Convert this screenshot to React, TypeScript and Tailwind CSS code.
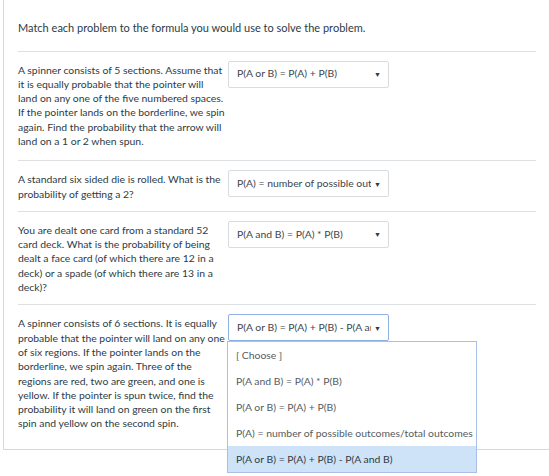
import React from 'react';

const font = { fontFamily: 'Lato, "Noto Sans", sans-serif' };

type Row = { lines: string[]; value: string; open?: boolean };

// lines are kept as in the question text, broken where the page breaks them
const rows: Row[] = [
  {
    lines: [
      'A spinner consists of 5 sections. Assume that',
      'it is equally probable that the pointer will',
      'land on any one of the five numbered spaces.',
      'If the pointer lands on the borderline, we spin',
      'again. Find the probability that the arrow will',
      'land on a 1 or 2 when spun.',
    ],
    value: 'P(A or B) = P(A) + P(B)',
  },
  {
    lines: ['A standard six sided die is rolled. What is the', 'probability of getting a 2?'],
    value: 'P(A) = number of possible outcomes/total outcomes',
  },
  {
    lines: [
      'You are dealt one card from a standard 52',
      'card deck. What is the probability of being',
      'dealt a face card (of which there are 12 in a',
      'deck) or a spade (of which there are 13 in a',
      'deck)?',
    ],
    value: 'P(A and B) = P(A) * P(B)',
  },
  {
    lines: [
      'A spinner consists of 6 sections. It is equally',
      'probable that the pointer will land on any one',
      'of six regions. If the pointer lands on the',
      'borderline, we spin again. Three of the',
      'regions are red, two are green, and one is',
      'yellow. If the pointer is spun twice, find the',
      'probability it will land on green on the first',
      'spin and yellow on the second spin.',
    ],
    value: 'P(A or B) = P(A) + P(B) - P(A and B)',
    open: true,
  },
];

const options = [
  '[ Choose ]',
  'P(A and B) = P(A) * P(B)',
  'P(A or B) = P(A) + P(B)',
  'P(A) = number of possible outcomes/total outcomes',
  'P(A or B) = P(A) + P(B) - P(A and B)',
];

function Select({ value, open }: { value: string; open?: boolean }) {
  return (
    <div className="relative w-[161px] shrink-0">
      <div
        className={
          'flex h-[27px] items-center rounded-[2px] border bg-white pl-[8px] pr-[7px] ' +
          (open ? 'border-[#8fb0e3]' : 'border-[#d8dcdf]')
        }
      >
        <span className="min-w-0 flex-1 overflow-hidden whitespace-nowrap text-[10.4px] text-[#3d454c]">{value}</span>
        <span className="ml-[3px] text-[7px] text-[#2d3b45]">▼</span>
      </div>
      {open && (
        <div className="absolute left-[-1px] top-[27px] z-10 w-[250px] border border-[#a9c0e6] bg-white">
          {options.map((o, i) => (
            <div
              key={o}
              className={
                'flex h-[26px] items-center whitespace-nowrap pl-[8px] text-[10.4px] ' +
                (i === options.length - 1 ? 'bg-[#cfe3f8] text-[#2d3b45]' : 'text-[#555c62]')
              }
            >
              {o}
            </div>
          ))}
        </div>
      )}
    </div>
  );
}

export default function App() {
  return (
    <div className="h-[476px] w-[549px] overflow-hidden bg-white" style={font}>
      <div className="ml-[3px] w-[549px] border-b border-l border-[#d5d9dc] pb-[8px] pl-[14px] pr-[16px]">
        <div className="border-b border-[#dde0e3] pb-[14px] pt-[20px] text-[11px] text-[#2d3b45]">
          Match each problem to the formula you would use to solve the problem.
        </div>
        {rows.map((r, i) => (
          <div
            key={i}
            className={
              'flex gap-[2px] pt-[9px] ' +
              (i === 0 ? 'pb-[12px] ' : 'pb-[10px] ') +
              (i < rows.length - 1 ? 'border-b border-[#dde0e3]' : '')
            }
          >
            <p className="mt-[2px] w-[208px] shrink-0 text-[10.4px] leading-[14.3px] text-[#2d3b45]">
              {r.lines.map((l, j) => (
                <span key={j} className="block whitespace-nowrap">
                  {l}
                </span>
              ))}
            </p>
            <Select value={r.value} open={r.open} />
          </div>
        ))}
      </div>
    </div>
  );
}
